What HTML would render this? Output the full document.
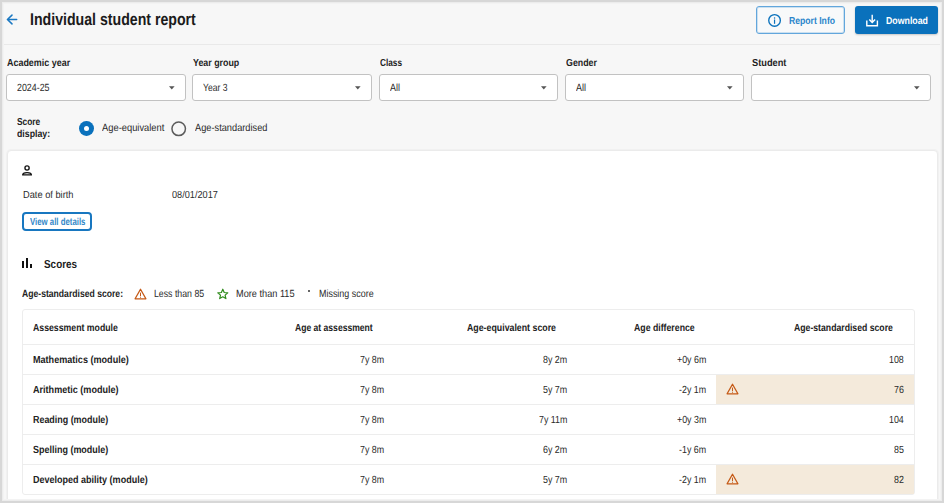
<!DOCTYPE html>
<html><head><meta charset="utf-8"><title>Individual student report</title>
<style>
html,body{margin:0;padding:0;}
body{width:944px;height:503px;overflow:hidden;position:relative;background:#f7f7f7;font-family:"Liberation Sans",sans-serif;text-rendering:geometricPrecision;}
.t{position:absolute;white-space:nowrap;transform-origin:0 0;}
svg{display:block}
</style></head><body>
<div style="position:absolute;left:2px;top:44px;width:940px;height:1px;background:#e9e9e9"></div>
<svg style="position:absolute;left:5px;top:12px" width="14" height="15" viewBox="0 0 14 15"><path d="M11.7 7.5H2.6M7 3.1L2.4 7.5L7 11.9" fill="none" stroke="#1a78c2" stroke-width="1.5" stroke-linecap="round" stroke-linejoin="round"/></svg>
<div class="t" style="left:29.70px;top:10.31px;font-size:17px;line-height:20.4px;font-weight:700;color:#1b1b1b;transform:scaleX(0.8319);">Individual student report</div>
<div style="position:absolute;left:756px;top:6px;width:89px;height:28px;box-sizing:border-box;border:1px solid #62a6dc;border-radius:3px;background:#f8f9fa;box-shadow:inset 0 0 0 1px rgba(98,166,220,.3)"></div>
<svg style="position:absolute;left:760px;top:8px" width="30" height="24" viewBox="760 8 30 24"><circle cx="774.55" cy="20.45" r="5.8" fill="none" stroke="#0a71bc" stroke-width="1.35"/><rect x="773.95" y="19.5" width="1.2" height="4.3" fill="#0a71bc"/><circle cx="774.55" cy="17.9" r="0.75" fill="#0a71bc"/></svg>
<div class="t" style="left:788.70px;top:15.75px;font-size:10.2px;line-height:12.24px;font-weight:700;color:#2a85cb;transform:scaleX(0.8475);">Report Info</div>
<div style="position:absolute;left:855px;top:6px;width:83px;height:28px;border-radius:3px;background:#0a71bc;box-shadow:0 1px 2px rgba(0,0,0,.2)"></div>
<svg style="position:absolute;left:858px;top:8px" width="40" height="24" viewBox="858 8 40 24"><path d="M872.2 14.8V22" fill="none" stroke="#fff" stroke-width="1.4"/><path d="M869.3 19.5L872.2 22.5L875.1 19.5" fill="none" stroke="#fff" stroke-width="1.5"/><path d="M866.8 20.4V25.7H877.4V20.4" fill="none" stroke="#fff" stroke-width="1.4"/></svg>
<div class="t" style="left:886.40px;top:15.75px;font-size:10.2px;line-height:12.24px;font-weight:700;color:#fff;transform:scaleX(0.8620);">Download</div>
<div class="t" style="left:6.60px;top:57.75px;font-size:10.2px;line-height:12.24px;font-weight:700;color:#1e1e1e;transform:scaleX(0.8776);">Academic year</div>
<div style="position:absolute;left:6px;top:74px;width:180px;height:27px;box-sizing:border-box;border:1px solid #c2c2c2;border-radius:3px;background:#fff"></div>
<div class="t" style="left:16.60px;top:82.56px;font-size:10.4px;line-height:12.48px;font-weight:400;color:#2a2a2a;transform:scaleX(0.8515);">2024-25</div>
<svg style="position:absolute;left:169.20px;top:85.6px" width="6" height="4" viewBox="0 0 6 4"><path d="M0 0.2H5.6L2.8 3.4Z" fill="#555"/></svg>
<div class="t" style="left:192.60px;top:57.75px;font-size:10.2px;line-height:12.24px;font-weight:700;color:#1e1e1e;transform:scaleX(0.8689);">Year group</div>
<div style="position:absolute;left:192px;top:74px;width:180px;height:27px;box-sizing:border-box;border:1px solid #c2c2c2;border-radius:3px;background:#fff"></div>
<div class="t" style="left:202.60px;top:82.56px;font-size:10.4px;line-height:12.48px;font-weight:400;color:#2a2a2a;transform:scaleX(0.8251);">Year 3</div>
<svg style="position:absolute;left:355.20px;top:85.6px" width="6" height="4" viewBox="0 0 6 4"><path d="M0 0.2H5.6L2.8 3.4Z" fill="#555"/></svg>
<div class="t" style="left:379.60px;top:57.75px;font-size:10.2px;line-height:12.24px;font-weight:700;color:#1e1e1e;transform:scaleX(0.8121);">Class</div>
<div style="position:absolute;left:379px;top:74px;width:179px;height:27px;box-sizing:border-box;border:1px solid #c2c2c2;border-radius:3px;background:#fff"></div>
<div class="t" style="left:389.60px;top:82.56px;font-size:10.4px;line-height:12.48px;font-weight:400;color:#2a2a2a;transform:scaleX(0.8655);">All</div>
<svg style="position:absolute;left:541.20px;top:85.6px" width="6" height="4" viewBox="0 0 6 4"><path d="M0 0.2H5.6L2.8 3.4Z" fill="#555"/></svg>
<div class="t" style="left:565.60px;top:57.75px;font-size:10.2px;line-height:12.24px;font-weight:700;color:#1e1e1e;transform:scaleX(0.8681);">Gender</div>
<div style="position:absolute;left:565px;top:74px;width:179px;height:27px;box-sizing:border-box;border:1px solid #c2c2c2;border-radius:3px;background:#fff"></div>
<div class="t" style="left:575.60px;top:82.56px;font-size:10.4px;line-height:12.48px;font-weight:400;color:#2a2a2a;transform:scaleX(0.8655);">All</div>
<svg style="position:absolute;left:727.20px;top:85.6px" width="6" height="4" viewBox="0 0 6 4"><path d="M0 0.2H5.6L2.8 3.4Z" fill="#555"/></svg>
<div class="t" style="left:751.60px;top:57.75px;font-size:10.2px;line-height:12.24px;font-weight:700;color:#1e1e1e;transform:scaleX(0.9087);">Student</div>
<div style="position:absolute;left:751px;top:74px;width:180px;height:27px;box-sizing:border-box;border:1px solid #c2c2c2;border-radius:3px;background:#fff"></div>
<svg style="position:absolute;left:914.20px;top:85.6px" width="6" height="4" viewBox="0 0 6 4"><path d="M0 0.2H5.6L2.8 3.4Z" fill="#555"/></svg>
<div class="t" style="left:16.90px;top:116.75px;font-size:10.2px;line-height:12.24px;font-weight:700;color:#222;transform:scaleX(0.8220);">Score</div>
<div class="t" style="left:16.90px;top:128.75px;font-size:10.2px;line-height:12.24px;font-weight:700;color:#222;transform:scaleX(0.8587);">display:</div>
<div style="position:absolute;left:79px;top:121.3px;width:14.8px;height:14.8px;box-sizing:border-box;border-radius:50%;background:#0a71bc"></div>
<div style="position:absolute;left:83.9px;top:126.2px;width:5px;height:5px;border-radius:50%;background:#fff"></div>
<div class="t" style="left:102.20px;top:122.56px;font-size:10.4px;line-height:12.48px;font-weight:400;color:#2a2a2a;transform:scaleX(0.8994);">Age-equivalent</div>
<svg style="position:absolute;left:170px;top:120px" width="18" height="18" viewBox="170 120 18 18"><circle cx="178.7" cy="128.85" r="6.75" fill="none" stroke="#5c5c5c" stroke-width="1.5"/></svg>
<div class="t" style="left:194.50px;top:122.56px;font-size:10.4px;line-height:12.48px;font-weight:400;color:#2a2a2a;transform:scaleX(0.8894);">Age-standardised</div>
<div style="position:absolute;left:7px;top:150px;width:931px;height:400px;box-sizing:border-box;border:1px solid #ebebeb;border-radius:4px;background:#fff;box-shadow:0 0 0 1px #f1f1f1"></div>
<svg style="position:absolute;left:15px;top:158px" width="30" height="24" viewBox="15 158 30 24"><circle cx="27.05" cy="168" r="2.1" fill="none" stroke="#111" stroke-width="1.35"/><path d="M22.7 174.9C22.7 173.3 25.2 172.55 27.05 172.55S31.4 173.3 31.4 174.9Z" fill="none" stroke="#111" stroke-width="1.35" stroke-linejoin="round"/></svg>
<div class="t" style="left:23.20px;top:189.75px;font-size:10.2px;line-height:12.24px;font-weight:400;color:#2a2a2a;transform:scaleX(0.9089);">Date of birth</div>
<div class="t" style="left:172.30px;top:189.75px;font-size:10.2px;line-height:12.24px;font-weight:400;color:#2a2a2a;transform:scaleX(0.8991);">08/01/2017</div>
<div style="position:absolute;left:22px;top:212px;width:70px;height:19px;box-sizing:border-box;border:2px solid #1877c0;border-radius:4px"></div>
<div class="t" style="left:29.60px;top:216.75px;font-size:10.2px;line-height:12.24px;font-weight:700;color:#3287c8;transform:scaleX(0.7668);">View all details</div>
<div style="position:absolute;left:21.6px;top:261px;width:2.3px;height:7px;background:#111"></div>
<div style="position:absolute;left:26px;top:258px;width:2.3px;height:10px;background:#111"></div>
<div style="position:absolute;left:30.2px;top:263.6px;width:2.3px;height:4.4px;background:#111"></div>
<div class="t" style="left:44.20px;top:258.42px;font-size:11.6px;line-height:13.92px;font-weight:700;color:#1b1b1b;transform:scaleX(0.8556);">Scores</div>
<div class="t" style="left:22.40px;top:288.56px;font-size:10.4px;line-height:12.48px;font-weight:700;color:#222;transform:scaleX(0.8290);">Age-standardised score:</div>
<svg style="position:absolute;left:134px;top:287.6px" width="13" height="12" viewBox="0 0 13 12"><path d="M6.5 1.2L11.9 10.8H1.1Z" fill="none" stroke="#c55a17" stroke-width="1.3" stroke-linejoin="round"/><rect x="6" y="4.6" width="1" height="3.4" fill="#c55a17"/><rect x="6" y="8.7" width="1" height="1" fill="#c55a17"/></svg>
<div class="t" style="left:154.40px;top:288.56px;font-size:10.4px;line-height:12.48px;font-weight:400;color:#2a2a2a;transform:scaleX(0.8428);">Less than 85</div>
<svg style="position:absolute;left:216px;top:288px" width="14" height="12" viewBox="0 0 14 12"><path d="M6.8 1.2L8.2 4.5L11.8 4.8L9.1 7.1L9.9 10.6L6.8 8.8L3.7 10.6L4.5 7.1L1.8 4.8L5.4 4.5Z" fill="none" stroke="#2f8c1c" stroke-width="1.2" stroke-linejoin="round"/></svg>
<div class="t" style="left:236.40px;top:288.56px;font-size:10.4px;line-height:12.48px;font-weight:400;color:#2a2a2a;transform:scaleX(0.8839);">More than 115</div>
<div style="position:absolute;left:308.4px;top:290.2px;width:2px;height:2px;background:#333;border-radius:1px"></div>
<div class="t" style="left:319.00px;top:288.56px;font-size:10.4px;line-height:12.48px;font-weight:400;color:#2a2a2a;transform:scaleX(0.8604);">Missing score</div>
<div style="position:absolute;left:22px;top:309px;width:893px;height:186px;box-sizing:border-box;border:1px solid #ededed;border-radius:3px"></div>
<div style="position:absolute;left:22px;top:344.0px;width:893px;height:1px;background:#ededed"></div>
<div style="position:absolute;left:22px;top:374.0px;width:893px;height:1px;background:#ededed"></div>
<div style="position:absolute;left:22px;top:404.0px;width:893px;height:1px;background:#ededed"></div>
<div style="position:absolute;left:22px;top:434.0px;width:893px;height:1px;background:#ededed"></div>
<div style="position:absolute;left:22px;top:464.0px;width:893px;height:1px;background:#ededed"></div>
<div style="position:absolute;left:716px;top:375.0px;width:198px;height:29px;background:#f4eadb"></div>
<div style="position:absolute;left:716px;top:465.0px;width:198px;height:29px;background:#f4eadb"></div>
<div class="t" style="left:33.00px;top:322.65px;font-size:10.3px;line-height:12.36px;font-weight:700;color:#222;transform:scaleX(0.8475);">Assessment module</div>
<div class="t" style="left:295.30px;top:322.65px;font-size:10.3px;line-height:12.36px;font-weight:700;color:#222;transform:scaleX(0.8326);">Age at assessment</div>
<div class="t" style="left:466.80px;top:322.65px;font-size:10.3px;line-height:12.36px;font-weight:700;color:#222;transform:scaleX(0.8543);">Age-equivalent score</div>
<div class="t" style="left:634.20px;top:322.65px;font-size:10.3px;line-height:12.36px;font-weight:700;color:#222;transform:scaleX(0.8484);">Age difference</div>
<div class="t" style="left:793.80px;top:322.65px;font-size:10.3px;line-height:12.36px;font-weight:700;color:#222;transform:scaleX(0.8428);">Age-standardised score</div>
<div class="t" style="left:33.00px;top:354.65px;font-size:10.3px;line-height:12.36px;font-weight:700;color:#222;transform:scaleX(0.8810);">Mathematics (module)</div>
<div class="t" style="left:359.97px;top:354.65px;font-size:10.3px;line-height:12.36px;font-weight:400;color:#2a2a2a;transform:scaleX(0.8605);">7y 8m</div>
<div class="t" style="left:542.87px;top:354.65px;font-size:10.3px;line-height:12.36px;font-weight:400;color:#2a2a2a;transform:scaleX(0.8605);">8y 2m</div>
<div class="t" style="left:676.69px;top:354.65px;font-size:10.3px;line-height:12.36px;font-weight:400;color:#2a2a2a;transform:scaleX(0.8605);">+0y 6m</div>
<div class="t" style="left:889.22px;top:354.65px;font-size:10.3px;line-height:12.36px;font-weight:400;color:#2a2a2a;transform:scaleX(0.8605);">108</div>
<div class="t" style="left:33.00px;top:384.65px;font-size:10.3px;line-height:12.36px;font-weight:700;color:#222;transform:scaleX(0.8799);">Arithmetic (module)</div>
<div class="t" style="left:359.97px;top:384.65px;font-size:10.3px;line-height:12.36px;font-weight:400;color:#2a2a2a;transform:scaleX(0.8605);">7y 8m</div>
<div class="t" style="left:542.87px;top:384.65px;font-size:10.3px;line-height:12.36px;font-weight:400;color:#2a2a2a;transform:scaleX(0.8605);">5y 7m</div>
<div class="t" style="left:678.91px;top:384.65px;font-size:10.3px;line-height:12.36px;font-weight:400;color:#2a2a2a;transform:scaleX(0.8605);">-2y 1m</div>
<div class="t" style="left:894.14px;top:384.65px;font-size:10.3px;line-height:12.36px;font-weight:400;color:#2a2a2a;transform:scaleX(0.8605);">76</div>
<div class="t" style="left:33.00px;top:414.65px;font-size:10.3px;line-height:12.36px;font-weight:700;color:#222;transform:scaleX(0.8658);">Reading (module)</div>
<div class="t" style="left:359.97px;top:414.65px;font-size:10.3px;line-height:12.36px;font-weight:400;color:#2a2a2a;transform:scaleX(0.8605);">7y 8m</div>
<div class="t" style="left:538.59px;top:414.65px;font-size:10.3px;line-height:12.36px;font-weight:400;color:#2a2a2a;transform:scaleX(0.8605);">7y 11m</div>
<div class="t" style="left:676.69px;top:414.65px;font-size:10.3px;line-height:12.36px;font-weight:400;color:#2a2a2a;transform:scaleX(0.8605);">+0y 3m</div>
<div class="t" style="left:889.22px;top:414.65px;font-size:10.3px;line-height:12.36px;font-weight:400;color:#2a2a2a;transform:scaleX(0.8605);">104</div>
<div class="t" style="left:33.00px;top:444.65px;font-size:10.3px;line-height:12.36px;font-weight:700;color:#222;transform:scaleX(0.8715);">Spelling (module)</div>
<div class="t" style="left:359.97px;top:444.65px;font-size:10.3px;line-height:12.36px;font-weight:400;color:#2a2a2a;transform:scaleX(0.8605);">7y 8m</div>
<div class="t" style="left:542.87px;top:444.65px;font-size:10.3px;line-height:12.36px;font-weight:400;color:#2a2a2a;transform:scaleX(0.8605);">6y 2m</div>
<div class="t" style="left:678.91px;top:444.65px;font-size:10.3px;line-height:12.36px;font-weight:400;color:#2a2a2a;transform:scaleX(0.8605);">-1y 6m</div>
<div class="t" style="left:894.14px;top:444.65px;font-size:10.3px;line-height:12.36px;font-weight:400;color:#2a2a2a;transform:scaleX(0.8605);">85</div>
<div class="t" style="left:33.00px;top:474.65px;font-size:10.3px;line-height:12.36px;font-weight:700;color:#222;transform:scaleX(0.8752);">Developed ability (module)</div>
<div class="t" style="left:359.97px;top:474.65px;font-size:10.3px;line-height:12.36px;font-weight:400;color:#2a2a2a;transform:scaleX(0.8605);">7y 8m</div>
<div class="t" style="left:542.87px;top:474.65px;font-size:10.3px;line-height:12.36px;font-weight:400;color:#2a2a2a;transform:scaleX(0.8605);">5y 7m</div>
<div class="t" style="left:678.91px;top:474.65px;font-size:10.3px;line-height:12.36px;font-weight:400;color:#2a2a2a;transform:scaleX(0.8605);">-2y 1m</div>
<div class="t" style="left:894.14px;top:474.65px;font-size:10.3px;line-height:12.36px;font-weight:400;color:#2a2a2a;transform:scaleX(0.8605);">82</div>
<svg style="position:absolute;left:726px;top:383.1px" width="13" height="12" viewBox="0 0 13 12"><path d="M6.5 1.2L11.9 10.8H1.1Z" fill="none" stroke="#c55a17" stroke-width="1.3" stroke-linejoin="round"/><rect x="6" y="4.6" width="1" height="3.4" fill="#c55a17"/><rect x="6" y="8.7" width="1" height="1" fill="#c55a17"/></svg>
<svg style="position:absolute;left:726px;top:473.1px" width="13" height="12" viewBox="0 0 13 12"><path d="M6.5 1.2L11.9 10.8H1.1Z" fill="none" stroke="#c55a17" stroke-width="1.3" stroke-linejoin="round"/><rect x="6" y="4.6" width="1" height="3.4" fill="#c55a17"/><rect x="6" y="8.7" width="1" height="1" fill="#c55a17"/></svg>
<div style="position:absolute;left:0px;top:0px;width:944px;height:503px;box-sizing:border-box;border:2px solid #d7d7d7;box-shadow:inset 0 0 0 1px #ececec,inset 0 0 0 2px #f3f3f3;z-index:10"></div>
</body></html>
